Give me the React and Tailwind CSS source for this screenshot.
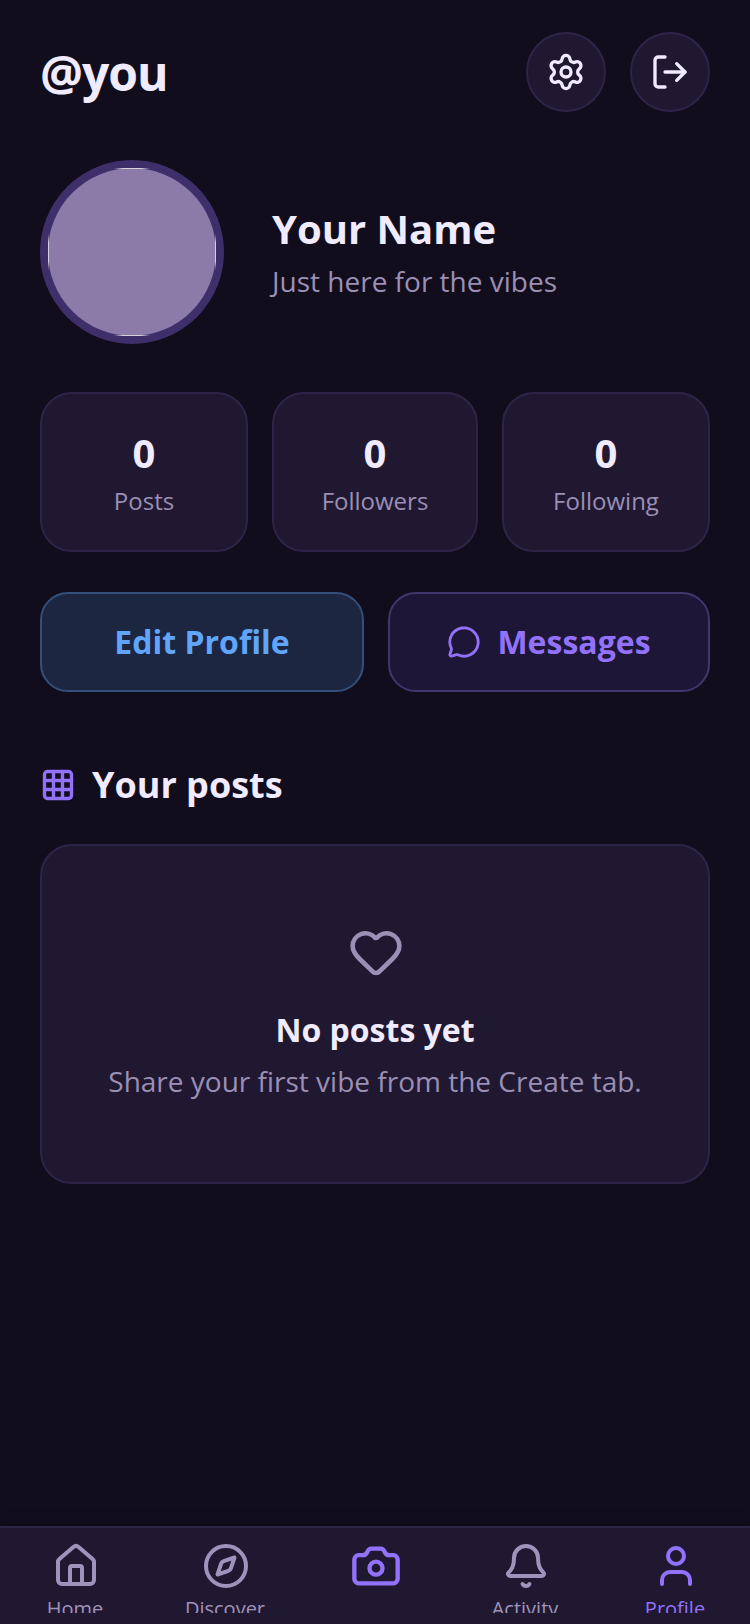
import { Settings, LogOut, MessageCircle, Grid3x3, Heart, House, Compass, Camera, Bell, User } from 'lucide-react';

const stats = [
  { label: 'Posts', width: 'w-[208px]' },
  { label: 'Followers', width: 'w-[206px]' },
  { label: 'Following', width: 'w-[208px]' },
];

const tabs = [
  { label: 'Home', Icon: House, size: 48 },
  { label: 'Discover', Icon: Compass, size: 48 },
  { label: '', Icon: Camera, size: 52, accent: true },
  { label: 'Activity', Icon: Bell, size: 48 },
  { label: 'Profile', Icon: User, size: 48, active: true },
];

const App = () => {
  return (
    <div className="w-[750px] h-[1624px] overflow-hidden flex flex-col bg-[#110d1c] text-[#f0ebff] font-['Open_Sans',sans-serif]">
      <div className="flex-1 px-10 pt-8">
        {/* Header */}
        <div className="flex items-center justify-between h-20">
          <h1 className="text-[48px] leading-none font-bold tracking-[-1px] mt-0.5">@you</h1>
          <div className="flex gap-6">
            <button className="w-20 h-20 rounded-full bg-[#1f1830] border-2 border-[#2d2547] flex items-center justify-center" aria-label="Settings">
              <Settings size={40} strokeWidth={2} />
            </button>
            <button className="w-20 h-20 rounded-full bg-[#1f1830] border-2 border-[#2d2547] flex items-center justify-center" aria-label="Log out">
              <LogOut size={40} strokeWidth={2} />
            </button>
          </div>
        </div>

        {/* Profile */}
        <div className="flex items-center gap-12 mt-12">
          <div className="relative w-[184px] h-[184px] rounded-full border-8 border-[#3e2f6b] bg-[#8c7aa9] shrink-0">
            <span className="absolute top-0 left-[66px] w-9 h-px bg-[linear-gradient(90deg,transparent,#d5cfdc_25%,#d5cfdc_75%,transparent)]" />
            <span className="absolute bottom-0 left-[66px] w-9 h-px bg-[linear-gradient(90deg,transparent,#d5cfdc_25%,#d5cfdc_75%,transparent)]" />
            <span className="absolute left-0 top-[66px] h-9 w-px bg-[linear-gradient(180deg,transparent,#d5cfdc_25%,#d5cfdc_75%,transparent)]" />
            <span className="absolute right-0 top-[66px] h-9 w-px bg-[linear-gradient(180deg,transparent,#d5cfdc_25%,#d5cfdc_75%,transparent)]" />
          </div>
          <div className="-mt-0.5">
            <div className="text-[40px] leading-[56px] font-bold">Your Name</div>
            <div className="text-[28px] leading-[40px] text-[#9b8fb5] mt-1">Just here for the vibes</div>
          </div>
        </div>

        {/* Stats */}
        <div className="flex justify-between mt-12">
          {stats.map(s => (
            <div key={s.label} className={`${s.width} h-40 rounded-[32px] bg-[#1f1830] border-2 border-[#2d2547] flex flex-col items-center pt-[29px]`}>
              <div className="text-[40px] leading-[60px] font-bold">0</div>
              <div className="text-[24px] leading-[36px] text-[#9b8fb5]">{s.label}</div>
            </div>
          ))}
        </div>

        {/* Actions */}
        <div className="flex gap-6 mt-10">
          <button className="w-[324px] h-[100px] rounded-[28px] bg-[#1c2640] border-2 border-[#34507a] text-[#60a5fa] text-[32px] font-bold">
            Edit Profile
          </button>
          <button className="w-[322px] h-[100px] rounded-[28px] bg-[#1e1636] border-2 border-[#42366e] text-[#9272fa] text-[32px] font-bold flex items-center justify-center gap-4">
            <MessageCircle size={34} strokeWidth={2} />
            Messages
          </button>
        </div>

        {/* Posts */}
        <div className="flex items-center gap-4 mt-[69px] h-12">
          <Grid3x3 size={36} strokeWidth={2.25} className="text-[#9272fa]" />
          <h2 className="text-[36px] leading-none font-bold">Your posts</h2>
        </div>

        <div className="mt-[35px] h-[340px] rounded-[32px] bg-[#1f1830] border-2 border-[#2d2547] flex flex-col items-center pt-[78px]">
          <Heart size={56} strokeWidth={2} className="text-[#9b8fb5] ml-0.5" />
          <div className="text-[32px] leading-[44px] font-bold mt-7">No posts yet</div>
          <div className="text-[28px] leading-[40px] text-[#9b8fb5] mt-[9px]">Share your first vibe from the Create tab.</div>
        </div>
      </div>

      {/* Tab bar */}
      <div className="h-[98px] shrink-0 bg-[#1f1830] border-t-2 border-[#2d2547] grid grid-cols-5 pt-[14px] shadow-[0_-4px_12px_rgba(0,0,0,0.2)]">
        {tabs.map(({ label, Icon, size, accent, active }, i) => (
          <div key={i} className={`h-[71px] overflow-hidden flex flex-col items-center ${accent || active ? 'text-[#9272fa]' : 'text-[#a093bb]'}`}>
            <div className="h-12 flex items-center justify-center ml-0.5">
              <Icon size={size} strokeWidth={2} className="shrink-0" />
            </div>
            <span className="text-[20px] leading-[28px] mt-[5px]">{label}</span>
          </div>
        ))}
      </div>
    </div>
  );
};

export default App;
